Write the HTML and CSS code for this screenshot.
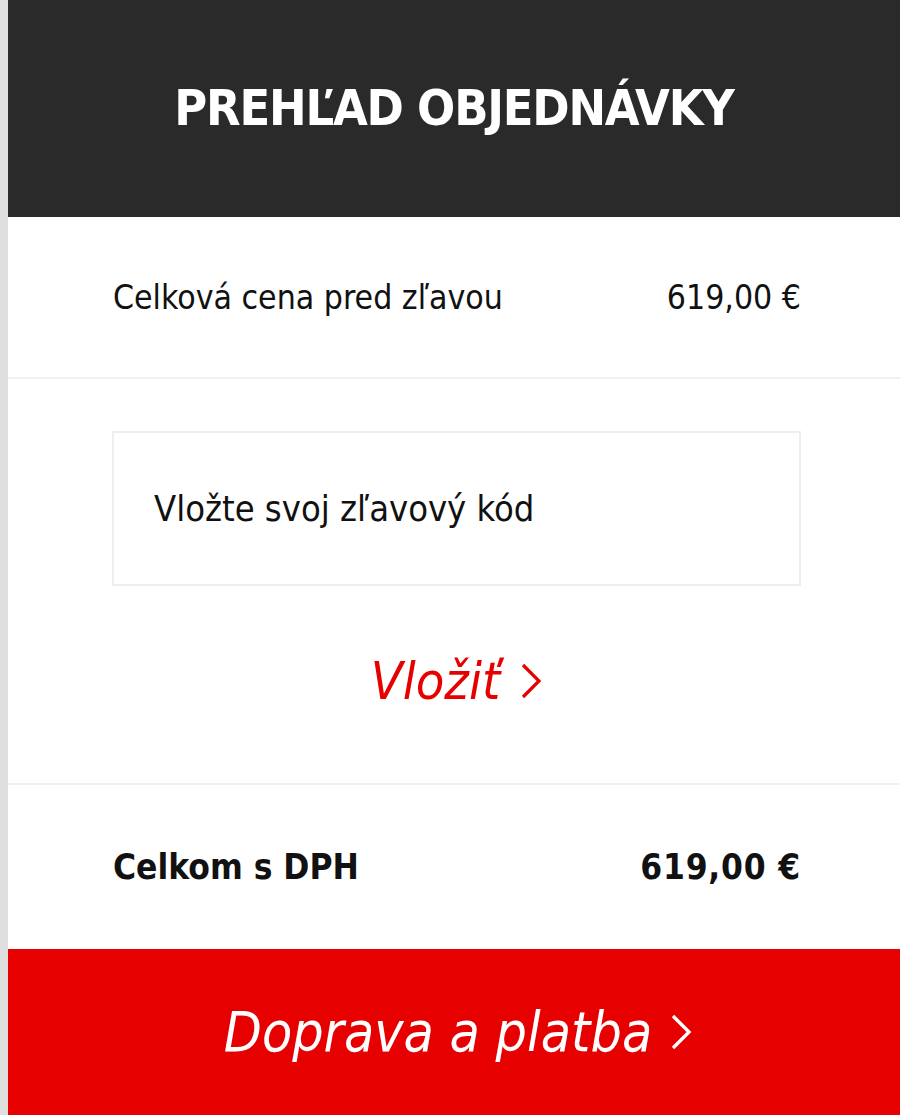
FILE: index.html
```html
<!DOCTYPE html>
<html lang="sk">
<head>
<meta charset="utf-8">
<title>Prehľad objednávky</title>
<link rel="stylesheet" href="styles.css">
</head>
<body>
<div class="page">
  <div class="summary">
    <header class="summary-head">
      <h1 class="summary-title">PREHĽAD OBJEDNÁVKY</h1>
    </header>
    <div class="row row-price">
      <span class="label">Celková cena pred zľavou</span>
      <span class="value">619,00 €</span>
    </div>
    <div class="coupon">
      <div class="coupon-input">Vložte svoj zľavový kód</div>
      <div class="coupon-action">
        <a class="coupon-apply" href="#">Vložiť <svg class="chev" viewBox="0 0 22 38" width="22" height="38"><path d="M3 3 L19 19 L3 35" fill="none" stroke="currentColor" stroke-width="3.2"/></svg></a>
      </div>
    </div>
    <div class="row row-total">
      <span class="label">Celkom s DPH</span>
      <span class="value">619,00 €</span>
    </div>
    <a class="checkout" href="#">Doprava a platba <svg class="chev" viewBox="0 0 22 38" width="22" height="38"><path d="M3 3 L19 19 L3 35" fill="none" stroke="currentColor" stroke-width="3.4"/></svg></a>
  </div>
</div>
</body>
</html>
```
FILE: styles.css
```css
html, body {
  margin: 0;
  padding: 0;
}
body {
  background: #dedede;
  font-family: "DejaVu Sans Condensed", "DejaVu Sans", sans-serif;
  color: #111;
}
.page {
  padding-left: 8px;
  min-height: 1115px;
}
.summary {
  background: #fff;
  min-height: 1115px;
  display: flex;
  flex-direction: column;
}
.summary-head {
  background: #2a2a2a;
  height: 217px;
  display: flex;
  align-items: center;
  justify-content: center;
}
.summary-title {
  margin: 0;
  color: #fff;
  font-size: 50px;
  font-weight: bold;
  letter-spacing: -1.2px;
  padding-bottom: 2px;
}
.row {
  display: flex;
  justify-content: space-between;
  align-items: center;
  padding: 0 99px 0 105px;
}
.row-price {
  height: 160px;
  border-bottom: 2px solid #f0f0f0;
  font-size: 33.5px;
}
.coupon {
  display: flex;
  flex-direction: column;
  padding: 52px 99px 0 104px;
  height: 406px;
  box-sizing: border-box;
  border-bottom: 2px solid #f0f0f0;
}
.coupon-input {
  height: 155px;
  box-sizing: border-box;
  border: 2px solid #eeeeee;
  display: flex;
  align-items: center;
  padding-left: 40px;
  font-size: 36px;
  color: #111;
}
.coupon-action {
  flex: 1;
  display: flex;
  align-items: center;
  justify-content: center;
  padding-bottom: 8px;
}
.coupon-apply {
  color: #e60000;
  text-decoration: none;
  font-style: italic;
  font-size: 52px;
  display: flex;
  align-items: center;
  gap: 20px;
}
.row-total {
  height: 164px;
  font-size: 35px;
  font-weight: bold;
}
.row-total .value {
  letter-spacing: 0.8px;
}
.checkout {
  flex: 1;
  background: #e60000;
  color: #fff;
  text-decoration: none;
  font-style: italic;
  font-size: 55px;
  display: flex;
  align-items: center;
  justify-content: center;
  gap: 18px;
  padding-left: 8px;
}
.chev {
  display: block;
}
```
